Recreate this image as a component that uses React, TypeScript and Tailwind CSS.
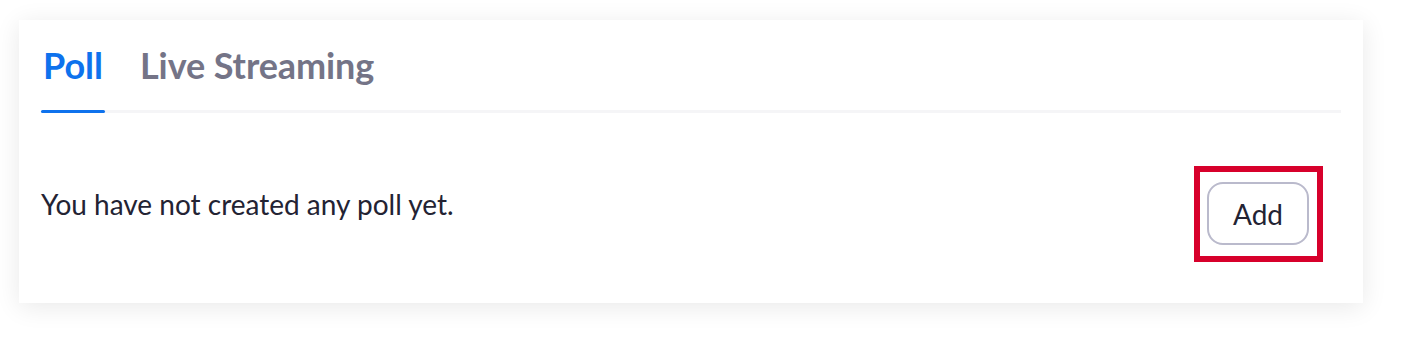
import React from "react";

export default function App() {
  return (
    <div className="w-[1412px] h-[355px] bg-white pt-[20px] pl-[19px]" style={{ fontFamily: "Lato, 'Open Sans', sans-serif" }}>
      <div className="w-[1344px] h-[283px] bg-white shadow-[0_4px_24px_rgba(0,0,0,0.09)] px-[22px]">
        <div className="flex items-end border-b-[3px] border-[#f5f5f7] h-[93px]">
          <div className="relative mr-[35px] pb-[23px] px-[2px]">
            <span className="text-[36px] leading-[44px] font-bold text-[#0e72ed]">Poll</span>
            <div className="absolute left-0 right-0 bottom-[-3px] h-[3px] bg-[#0e72ed] rounded-sm" />
          </div>
          <div className="pb-[23px]">
            <span className="text-[36px] leading-[44px] font-bold text-[#747487] tracking-[-0.1px]">Live Streaming</span>
          </div>
        </div>
        <div className="flex justify-between items-start">
          <p className="mt-[74px] text-[28px] leading-[34px] text-[#232333]">You have not created any poll yet.</p>
          <div className="mt-[53px] mr-[18px] border-[6px] border-[#d7002b] pt-[10px] pb-[11px] pl-[7px] pr-[8px]">
            <button className="w-[102px] h-[63px] border-2 border-[#babacc] rounded-[16px] text-[28px] text-[#232333] bg-white">Add</button>
          </div>
        </div>
      </div>
    </div>
  );
}
